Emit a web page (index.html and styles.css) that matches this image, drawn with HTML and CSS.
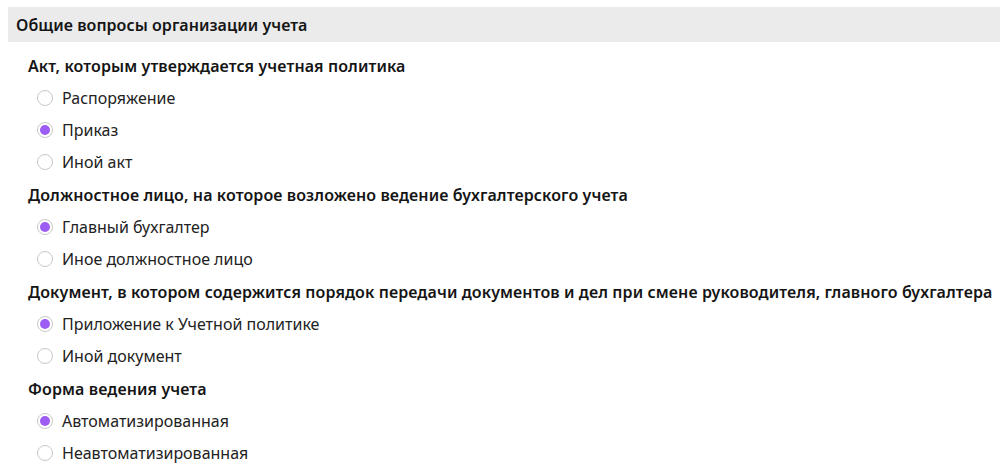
FILE: index.html
```html
<!DOCTYPE html>
<html lang="ru">
<head>
<meta charset="utf-8">
<title>Общие вопросы организации учета</title>
<link rel="stylesheet" href="styles.css">
</head>
<body>
<div class="page">
  <div class="bar">Общие вопросы организации учета</div>
  <div class="section">
    <div class="question">Акт, которым утверждается учетная политика</div>
    <label class="option"><span class="radio"></span>Распоряжение</label>
    <label class="option"><span class="radio checked"></span>Приказ</label>
    <label class="option"><span class="radio"></span>Иной акт</label>
  </div>
  <div class="section">
    <div class="question">Должностное лицо, на которое возложено ведение бухгалтерского учета</div>
    <label class="option"><span class="radio checked"></span>Главный бухгалтер</label>
    <label class="option"><span class="radio"></span>Иное должностное лицо</label>
  </div>
  <div class="section">
    <div class="question">Документ, в котором содержится порядок передачи документов и дел при смене руководителя, главного бухгалтера</div>
    <label class="option"><span class="radio checked"></span>Приложение к Учетной политике</label>
    <label class="option"><span class="radio"></span>Иной документ</label>
  </div>
  <div class="section">
    <div class="question">Форма ведения учета</div>
    <label class="option"><span class="radio checked"></span>Автоматизированная</label>
    <label class="option"><span class="radio"></span>Неавтоматизированная</label>
  </div>
</div>
</body>
</html>
```
FILE: styles.css
```css
html, body {
  margin: 0;
  padding: 0;
  background: #ffffff;
}
body {
  font-family: "Noto Sans", "Open Sans", sans-serif;
  color: #1a1a1a;
  overflow: hidden;
}
.page {
  padding: 7px 0 0 8px;
  display: flex;
  flex-direction: column;
}
.bar {
  height: 35px;
  display: flex;
  align-items: center;
  padding-left: 8px;
  background: #ebebeb;
  font-size: 16px;
  font-weight: 600;
  letter-spacing: 0.05px;
  color: #151515;
  margin-bottom: 8px;
}
.section {
  display: flex;
  flex-direction: column;
  padding-left: 20px;
  margin-bottom: 1px;
}
.question {
  height: 32px;
  display: flex;
  align-items: center;
  font-size: 16px;
  font-weight: 600;
  letter-spacing: 0.1px;
  color: #151515;
  white-space: nowrap;
}
.option {
  height: 32px;
  display: flex;
  align-items: center;
  gap: 9px;
  padding-left: 9px;
  font-size: 16px;
  color: #222222;
}
.radio {
  width: 16px;
  height: 16px;
  box-sizing: border-box;
  border: 1px solid #c8c8c8;
  border-radius: 50%;
  background: #ffffff;
  display: flex;
  align-items: center;
  justify-content: center;
  flex-shrink: 0;
}
.radio.checked::after {
  content: "";
  width: 10px;
  height: 10px;
  border-radius: 50%;
  background: #9d5cf3;
}
```
